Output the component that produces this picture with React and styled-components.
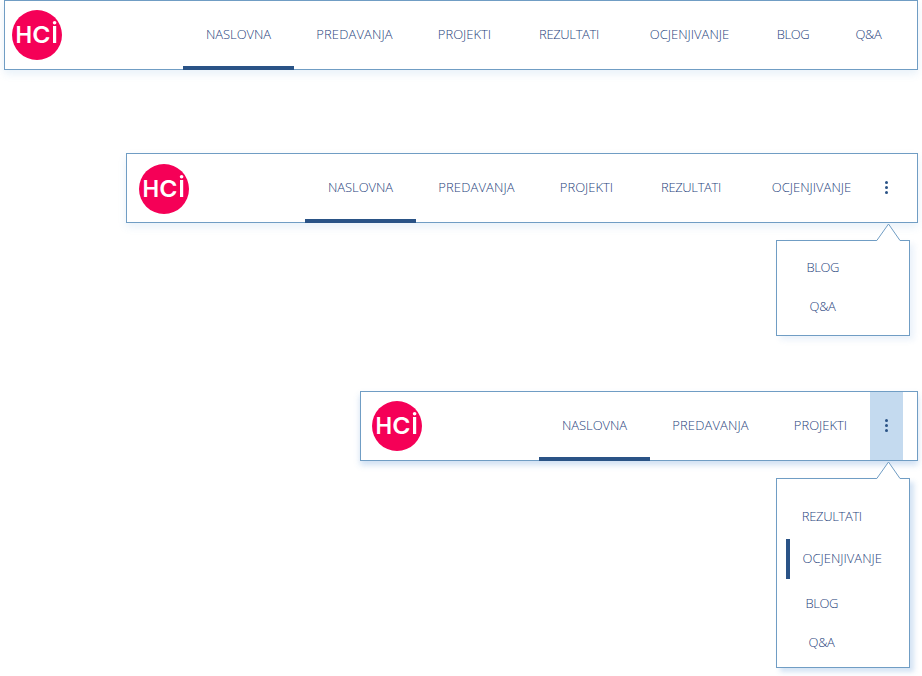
import React from 'react';
import styled, { createGlobalStyle } from 'styled-components';

const LINE = '#709dc4';
const NAVY = '#2a5386';
const INK = '#1f437c';

const GlobalStyle = createGlobalStyle`
  * { box-sizing: border-box; }
  body { margin: 0; background: #fff; overflow: hidden; }
`;

const Page = styled.main`
  display: flex;
  flex-direction: column;
  align-items: flex-end;
  width: 922px;
  height: 676px;
  padding-right: 4px;
  font-family: 'Open Sans', 'Noto Sans', sans-serif;
  font-size: 13px;
  font-weight: 300;
  color: ${INK};
`;

const Example = styled.section`
  display: flex;
  flex-direction: column;
  align-items: flex-end;
  margin-top: ${(p) => p.$gap || 0}px;
`;

const Bar = styled.nav`
  display: flex;
  justify-content: flex-end;
  width: ${(p) => p.$width}px;
  height: 70px;
  padding-right: ${(p) => p.$end}px;
  background: #fff;
  box-shadow: inset 0 0 0 1px ${LINE},
    ${(p) => (p.$raised ? '0 4px 6px rgba(74, 137, 208, 0.26)' : '0 4px 8px rgba(74, 144, 208, 0.13)')};
`;

const LogoLink = styled.a`
  width: 50px;
  height: 50px;
  margin: ${(p) => p.$top}px auto 0 ${(p) => p.$left}px;
`;

const LogoSvg = styled.svg`
  display: block;
  text {
    font-family: Inter, sans-serif;
    font-size: 23.4px;
    font-weight: 600;
    fill: #fff;
  }
`;

const Tab = styled.a`
  display: flex;
  align-items: center;
  justify-content: center;
  width: ${(p) => p.$width}px;
  height: 70px;
  border-top: 4px solid transparent;
  border-bottom: 4px solid ${(p) => (p.$active ? NAVY : 'transparent')};
`;

const Label = styled.span`
  padding-bottom: 2px;
  line-height: 18px;
  white-space: nowrap;
  letter-spacing: ${(p) => p.$tracking}px;
`;

const MoreButton = styled.button`
  display: flex;
  align-items: center;
  justify-content: center;
  width: 33px;
  height: 68px;
  margin: 1px 0 1px ${(p) => (p.$pull ? -7 : 0)}px;
  padding: 0 0 1px;
  border: 0;
  background: ${(p) => (p.$open ? '#c4daef' : 'transparent')};
`;

const Menu = styled.div`
  position: relative;
  width: 134px;
  height: ${(p) => p.$height}px;
  margin: 17px 8px 0 0;
  padding: ${(p) => p.$top}px 9px 0;
  border: 1px solid ${LINE};
  background: #fff;
  box-shadow: ${(p) => (p.$raised ? '4px 4px 5px rgba(74, 137, 208, 0.24)' : '4px 4px 6px rgba(74, 137, 208, 0.11)')};
`;

const Pointer = styled.svg`
  position: absolute;
  top: -18px;
  right: 8px;
`;

const MenuItem = styled.a`
  display: flex;
  align-items: center;
  height: ${(p) => p.$height}px;
  margin-top: ${(p) => p.$gap || 0}px;
  padding-left: ${(p) => p.$indent}px;
  border-left: 4px solid ${(p) => (p.$active ? NAVY : 'transparent')};
`;

const tabs = [
  { name: 'NASLOVNA', width: 111, tracking: -0.05 },
  { name: 'PREDAVANJA', width: 121, tracking: 0.12 },
  { name: 'PROJEKTI', width: 99, tracking: 0 },
  { name: 'REZULTATI', width: 110, tracking: -0.35 },
  { name: 'OCJENJIVANJE', width: 131, tracking: 0 },
  { name: 'BLOG', width: 76, tracking: -0.45 },
  { name: 'Q&A', width: 75, tracking: -0.4 },
];

const trackingOf = (name) => tabs.find((t) => t.name === name).tracking;

function Logo({ left, top }) {
  return (
    <LogoLink $left={left} $top={top}>
      <LogoSvg width="50" height="50" viewBox="0 0 50 50">
        <circle cx="25" cy="25" r="25" fill="#f50057" />
        <text x="3.4" y="33" textLength="16.6" lengthAdjust="spacingAndGlyphs">H</text>
        <text x="20.2" y="33" textLength="18.2" lengthAdjust="spacingAndGlyphs">C</text>
        <rect x="41" y="16" width="3.2" height="17" fill="#fff" />
        <circle cx="42.6" cy="12.7" r="1.8" fill="#fff" />
      </LogoSvg>
    </LogoLink>
  );
}

function Kebab({ open, pull }) {
  return (
    <MoreButton $open={open} $pull={pull} aria-label="More">
      <svg width="5" height="13" viewBox="0 0 5 13" fill={NAVY}>
        <circle cx="2.5" cy="1.5" r="1.5" />
        <circle cx="2.5" cy="6.5" r="1.5" />
        <circle cx="2.5" cy="11.5" r="1.5" />
      </svg>
    </MoreButton>
  );
}

function NavBar({ width, end, count, logo, raised, more }) {
  return (
    <Bar $width={width} $end={end} $raised={raised}>
      <Logo left={logo[0]} top={logo[1]} />
      {tabs.slice(0, count).map((t, i) => (
        <Tab key={t.name} $width={t.width} $active={i === 0}>
          <Label $tracking={t.tracking}>{t.name}</Label>
        </Tab>
      ))}
      {more && <Kebab {...more} />}
    </Bar>
  );
}

function Dropdown({ height, top, items, raised }) {
  return (
    <Menu $height={height} $top={top} $raised={raised}>
      <Pointer width="25" height="19" viewBox="0 0 25 19">
        <path d="M0.5 17.5 L12.5 1 L24.2 17.5 V19 H0.5 Z" fill="#fff" />
        <path d="M0 17.5 H0.8 L12.5 1 L24 17.5 H25" fill="none" stroke={LINE} />
      </Pointer>
      {items.map((it) => (
        <MenuItem key={it.name} $height={it.height} $gap={it.gap} $indent={it.indent} $active={it.active}>
          <Label $tracking={trackingOf(it.name)}>{it.name}</Label>
        </MenuItem>
      ))}
    </Menu>
  );
}

const shortMenu = [
  { name: 'BLOG', height: 40, indent: 16.6 },
  { name: 'Q&A', height: 38, indent: 19.6 },
];

const longMenu = [
  { name: 'REZULTATI', height: 40, indent: 11.8 },
  { name: 'OCJENJIVANJE', height: 40, gap: 2, indent: 12.6, active: true },
  { name: 'BLOG', height: 40, gap: 5, indent: 15.6 },
  { name: 'Q&A', height: 38, indent: 18.6 },
];

export default function App() {
  return (
    <>
      <GlobalStyle />
      <Page>
        <Example>
          <NavBar width={914} end={12} count={7} logo={[8, 10]} />
        </Example>
        <Example $gap={83}>
          <NavBar width={792} end={15} count={5} logo={[13, 11]} more={{ pull: true }} />
          <Dropdown height={96} top={7} items={shortMenu} />
        </Example>
        <Example $gap={55}>
          <NavBar width={558} end={15} count={3} logo={[12, 10]} raised more={{ open: true }} />
          <Dropdown height={190} top={18} items={longMenu} raised />
        </Example>
      </Page>
    </>
  );
}
